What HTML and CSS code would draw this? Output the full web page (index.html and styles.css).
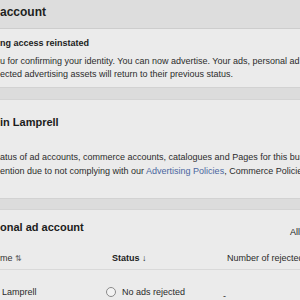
FILE: index.html
```html
<!DOCTYPE html>
<html>
<head>
<meta charset="utf-8">
<link rel="stylesheet" href="styles.css">
</head>
<body>
<div class="page">
  <header class="top"><h1 class="top-title">account</h1></header>

  <section class="card card-notice">
    <div class="notice-title">ng access reinstated</div>
    <p class="body-text">u for confirming your identity. You can now advertise. Your ads, personal ad<br>ected advertising assets will return to their previous status.</p>
  </section>

  <section class="card card-biz">
    <h2 class="card-title">in Lamprell</h2>
    <p class="body-text biz-text">atus of ad accounts, commerce accounts, catalogues and Pages for this business<br>ention due to not complying with our <a class="link">Advertising Policies</a>, Commerce Policies</p>
  </section>

  <section class="card card-table">
    <div class="table-head">
      <h2 class="card-title">onal ad account</h2>
      <span class="filter">All</span>
    </div>
    <div class="thead">
      <div class="th">me <span class="sort">⇅</span></div>
      <div class="th th-status">Status <span class="arrow">↓</span></div>
      <div class="th th-num">Number of rejected ads</div>
    </div>
    <div class="trow">
      <div class="td">
        <div class="acct-name">Lamprell</div>
        <div class="acct-id">ID: 1475291638402</div>
      </div>
      <div class="td td-status">
        <span class="radio"></span>
        <div class="status-text">No ads rejected<div class="status-sub">in this account</div></div>
      </div>
      <div class="td td-num">-</div>
    </div>
  </section>
</div>
</body>
</html>
```

FILE: styles.css
```css
* { box-sizing: border-box; margin: 0; padding: 0; }
html, body { width: 300px; height: 300px; overflow: hidden; }
body {
  background: #dcdcdc;
  font-family: "Liberation Sans", Arial, sans-serif;
  color: #1e1f21;
}
.page { width: 300px; white-space: nowrap; overflow: hidden; }

.top {
  height: 29px;
  background: #dddddd;
  border-bottom: 1px solid #cdcdcd;
}
.top-title {
  font-size: 12px;
  font-weight: bold;
  line-height: 24px;
}

.card {
  background: #ebebeb;
  border-bottom: 1px solid #d2d2d2;
}

.card-notice { height: 59px; padding-top: 8px; }
.notice-title { font-size: 9px; font-weight: bold; line-height: 12px; color: #222; }
.body-text { font-size: 9px; line-height: 13px; color: #2c2c2c; margin-top: 6px; }

.card-biz { margin-top: 11px; height: 100px; padding-top: 15px; border-top: 1px solid #d4d4d4; }
.card-title { font-size: 11px; font-weight: bold; line-height: 14px; color: #1c1c1c; }
.biz-text { margin-top: 21px; line-height: 14px; }
.link { color: #4a66a0; }

.card-table { margin-top: 10px; height: 100px; padding-top: 10px; border-top: 1px solid #d4d4d4; }
.table-head { display: flex; align-items: flex-start; height: 18px; }
.table-head .card-title { flex: 1; }
.filter { font-size: 9px; line-height: 12px; margin-top: 6px; color: #222; }

.thead {
  display: grid;
  grid-template-columns: 106px 116px 1fr;
  margin-top: 8px;
  padding: 6px 0 4px;
  border-bottom: 1px solid #d9d9d9;
  font-size: 9px;
  line-height: 12px;
}
.th { color: #333; }
.sort { font-size: 8px; color: #666; }
.th-status { padding-left: 6px; font-weight: bold; color: #1c1c1c; }
.arrow { font-size: 9px; }
.th-num { padding-left: 5px; color: #2a2a2a; }

.trow {
  display: grid;
  grid-template-columns: 106px 116px 1fr;
  padding-top: 16px;
  font-size: 9px;
  line-height: 12px;
}
.td { color: #2a2a2a; }
.acct-name { padding-left: 2px; }
.acct-id { padding-left: 2px; font-size: 8px; color: #888; line-height: 10px; }
.td-status { display: flex; align-items: flex-start; gap: 6px; }
.radio {
  width: 10px; height: 10px;
  margin-top: 1px;
  border: 1px solid #8a8a8a;
  border-radius: 50%;
  background: #f2f2f2;
  flex: none;
}
.status-sub { font-size: 8px; color: #888; line-height: 10px; }
.td-num { padding-top: 4px; padding-left: 1px; }
```
